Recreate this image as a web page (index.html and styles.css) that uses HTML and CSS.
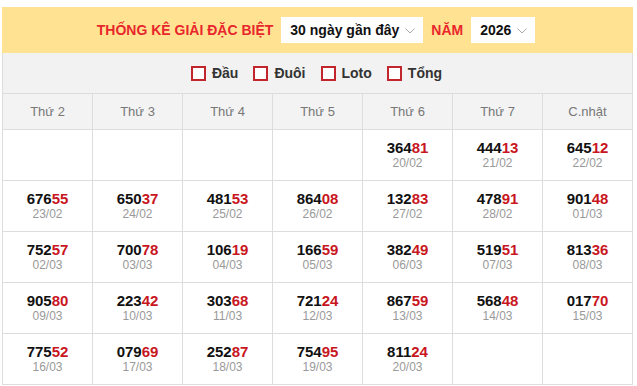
FILE: index.html
```html
<!DOCTYPE html>
<html lang="vi">
<head>
<meta charset="utf-8">
<link rel="stylesheet" href="styles.css">
</head>
<body>
<div class="wrap">
  <div class="top">
    <span class="title">THỐNG KÊ GIẢI ĐẶC BIỆT</span>
    <div class="select sel-days">30 ngày gần đây
      <svg class="chev" width="10" height="6" viewBox="0 0 10 6"><polyline points="0.5,0.5 5,5 9.5,0.5" fill="none" stroke="#aaa" stroke-width="1"/></svg>
    </div>
    <span class="title">NĂM</span>
    <div class="select sel-year">2026
      <svg class="chev" width="10" height="6" viewBox="0 0 10 6"><polyline points="0.5,0.5 5,5 9.5,0.5" fill="none" stroke="#aaa" stroke-width="1"/></svg>
    </div>
  </div>
  <div class="filters">
    <label class="chk"><span class="box"></span>Đầu</label>
    <label class="chk"><span class="box"></span>Đuôi</label>
    <label class="chk"><span class="box"></span>Loto</label>
    <label class="chk"><span class="box"></span>Tổng</label>
  </div>
  <div class="grid">
    <div class="hd">Thứ 2</div>
    <div class="hd">Thứ 3</div>
    <div class="hd">Thứ 4</div>
    <div class="hd">Thứ 5</div>
    <div class="hd">Thứ 6</div>
    <div class="hd">Thứ 7</div>
    <div class="hd">C.nhật</div>

    <div class="cell"></div>
    <div class="cell"></div>
    <div class="cell"></div>
    <div class="cell"></div>
    <div class="cell"><span class="num">364<b>81</b></span><span class="date">20/02</span></div>
    <div class="cell"><span class="num">444<b>13</b></span><span class="date">21/02</span></div>
    <div class="cell"><span class="num">645<b>12</b></span><span class="date">22/02</span></div>

    <div class="cell"><span class="num">676<b>55</b></span><span class="date">23/02</span></div>
    <div class="cell"><span class="num">650<b>37</b></span><span class="date">24/02</span></div>
    <div class="cell"><span class="num">481<b>53</b></span><span class="date">25/02</span></div>
    <div class="cell"><span class="num">864<b>08</b></span><span class="date">26/02</span></div>
    <div class="cell"><span class="num">132<b>83</b></span><span class="date">27/02</span></div>
    <div class="cell"><span class="num">478<b>91</b></span><span class="date">28/02</span></div>
    <div class="cell"><span class="num">901<b>48</b></span><span class="date">01/03</span></div>

    <div class="cell"><span class="num">752<b>57</b></span><span class="date">02/03</span></div>
    <div class="cell"><span class="num">700<b>78</b></span><span class="date">03/03</span></div>
    <div class="cell"><span class="num">106<b>19</b></span><span class="date">04/03</span></div>
    <div class="cell"><span class="num">166<b>59</b></span><span class="date">05/03</span></div>
    <div class="cell"><span class="num">382<b>49</b></span><span class="date">06/03</span></div>
    <div class="cell"><span class="num">519<b>51</b></span><span class="date">07/03</span></div>
    <div class="cell"><span class="num">813<b>36</b></span><span class="date">08/03</span></div>

    <div class="cell"><span class="num">905<b>80</b></span><span class="date">09/03</span></div>
    <div class="cell"><span class="num">223<b>42</b></span><span class="date">10/03</span></div>
    <div class="cell"><span class="num">303<b>68</b></span><span class="date">11/03</span></div>
    <div class="cell"><span class="num">721<b>24</b></span><span class="date">12/03</span></div>
    <div class="cell"><span class="num">867<b>59</b></span><span class="date">13/03</span></div>
    <div class="cell"><span class="num">568<b>48</b></span><span class="date">14/03</span></div>
    <div class="cell"><span class="num">017<b>70</b></span><span class="date">15/03</span></div>

    <div class="cell"><span class="num">775<b>52</b></span><span class="date">16/03</span></div>
    <div class="cell"><span class="num">079<b>69</b></span><span class="date">17/03</span></div>
    <div class="cell"><span class="num">252<b>87</b></span><span class="date">18/03</span></div>
    <div class="cell"><span class="num">754<b>95</b></span><span class="date">19/03</span></div>
    <div class="cell"><span class="num">811<b>24</b></span><span class="date">20/03</span></div>
    <div class="cell"></div>
    <div class="cell"></div>
  </div>
</div>
</body>
</html>
```
FILE: styles.css
```css
html, body {
  margin: 0;
  padding: 0;
  background: #fff;
}
body {
  font-family: "Liberation Sans", Arial, sans-serif;
}
.wrap {
  margin: 7px 0 0 2px;
  width: 631px;
}
.top {
  height: 46px;
  background: #ffe393;
  display: flex;
  align-items: center;
  justify-content: center;
  gap: 8px;
  padding-right: 3px;
  box-sizing: border-box;
}
.title {
  color: #e8262b;
  font-weight: bold;
  font-size: 14px;
}
.select {
  background: #fff;
  height: 26px;
  display: flex;
  align-items: center;
  justify-content: space-between;
  box-sizing: border-box;
  padding: 0 8px 0 9px;
  font-size: 14px;
  font-weight: bold;
  color: #111;
}
.sel-days { width: 142px; }
.sel-year { width: 64px; }
.chev { margin-top: 1px; }
.filters {
  height: 40px;
  background: #f2f2f2;
  border-left: 1px solid #ddd;
  border-right: 1px solid #ddd;
  box-sizing: border-box;
  display: flex;
  align-items: center;
  justify-content: center;
  gap: 15px;
  padding-right: 2px;
}
.chk {
  display: flex;
  align-items: center;
  gap: 6px;
  font-size: 14px;
  font-weight: bold;
  color: #333;
}
.box {
  width: 15px;
  height: 15px;
  box-sizing: border-box;
  border: 2px solid #c1262d;
  background: #fff;
}
.grid {
  display: grid;
  grid-template-columns: repeat(7, 89px);
  grid-template-rows: 35px repeat(5, 50px);
  gap: 1px;
  padding: 1px;
  background: #ddd;
  width: max-content;
}
.hd {
  background: #f3f3f3;
  color: #777;
  font-size: 13px;
  display: flex;
  align-items: center;
  justify-content: center;
}
.cell {
  background: #fff;
  display: flex;
  flex-direction: column;
  align-items: center;
  justify-content: center;
  padding-top: 1px;
}
.num {
  font-size: 15px;
  font-weight: bold;
  color: #111;
  line-height: 16px;
}
.num b {
  color: #c8161e;
}
.date {
  font-size: 12px;
  color: #999;
  line-height: 15px;
}
```
